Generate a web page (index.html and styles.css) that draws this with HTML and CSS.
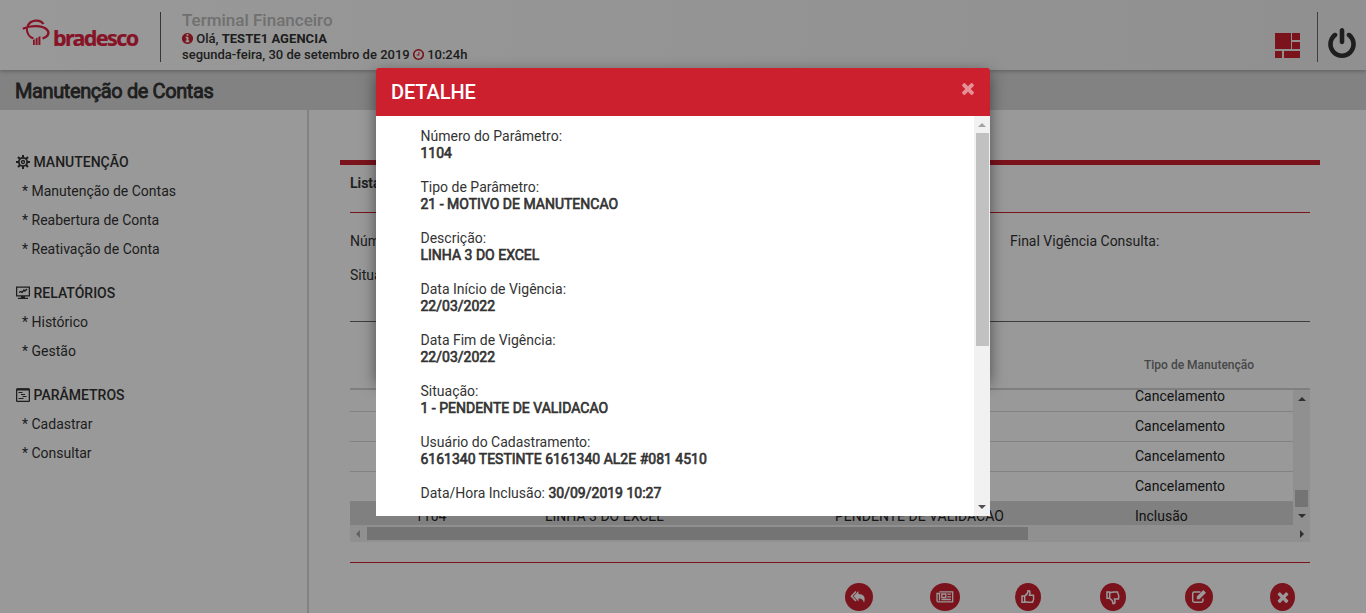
FILE: index.html
```html
<!DOCTYPE html>
<html lang="pt-BR">
<head>
<meta charset="utf-8">
<title>Terminal Financeiro</title>
<link rel="stylesheet" href="styles.css">
</head>
<body>
<div class="page">
  <header class="header">
    <div class="brand">
      <svg class="brand-mark" viewBox="0 0 30 28"><g fill="none" stroke="currentColor"><path d="M5.500 7C8.500 .6 18-.3 21.500 5" stroke-width="2.200"/><path d="M.8 9.800C9 6 20 6.500 24.800 10.500c3.500 3.500 1 7.500-4.300 9" stroke-width="2.300"/><path d="M4.800 8.500c-.3 5.500 2.500 10 6.700 11" stroke-width="1.900"/></g><path d="M11 21l1.800-.8V26H11zM13.600 19.500l2-1V26h-2zM16.400 18l2-1v9h-2z" fill="currentColor"/></svg>
      <span class="brand-name">bradesco</span>
    </div>
    <div class="session">
      <div class="system">Terminal Financeiro</div>
      <div class="line"><svg class="fa" viewBox="0 0 1792 1792"><path fill="currentColor" d="M1152 1376v-160q0-14-9-23t-23-9h-96v-512q0-14-9-23t-23-9h-320q-14 0-23 9t-9 23v160q0 14 9 23t23 9h96v320h-96q-14 0-23 9t-9 23v160q0 14 9 23t23 9h448q14 0 23-9t9-23zm-128-896v-160q0-14-9-23t-23-9h-192q-14 0-23 9t-9 23v160q0 14 9 23t23 9h192q14 0 23-9t9-23zm640 416q0 209-103 385.500t-279.500 279.500-385.500 103-385.500-103-279.500-279.500-103-385.500 103-385.500 279.500-279.500 385.500-103 385.500 103 279.500 279.500 103 385.500z"/></svg> Olá, <b>TESTE1 AGENCIA</b></div>
      <div class="line">segunda-feira, 30 de setembro de 2019 <svg class="fa" viewBox="0 0 1792 1792"><path fill="currentColor" d="M1024 544v448q0 14-9 23t-23 9h-320q-14 0-23-9t-9-23v-64q0-14 9-23t23-9h224v-352q0-14 9-23t23-9h64q14 0 23 9t9 23zm416 352q0-148-73-273t-198-198-273-73-273 73-198 198-73 273 73 273 198 198 273 73 273-73 198-198 73-273zm224 0q0 209-103 385.500t-279.500 279.500-385.500 103-385.500-103-279.500-279.500-103-385.500 103-385.500 279.500-279.500 385.500-103 385.500 103 279.500 279.500 103 385.500z"/></svg> 10:24h</div>
    </div>
    <div class="tools">
      <svg class="tiles" viewBox="0 0 25 25"><path fill="currentColor" d="M0 0h16v16H0zM17 0h8v7h-8zM17 9h8v7h-8zM0 18h7v7H0zM9 18h16v7H9z"/></svg>
      <span class="rule"></span>
      <svg class="power" viewBox="128 0 1536 1664"><path fill="currentColor" d="M1664 896q0 156-61 298t-164 245-245 164-298 61-298-61-245-164-164-245-61-298q0-182 80.500-343t226.500-270q43-32 95.500-25t83.500 50q32 42 24.500 94.500t-49.500 84.500q-98 74-151.500 181t-53.500 228q0 104 40.500 198.500t109.500 163.500 163.500 109.500 198.500 40.500 198.500-40.500 163.500-109.500 109.500-163.500 40.500-198.500q0-121-53.500-228t-151.500-181q-42-32-49.500-84.500t24.500-94.500q31-43 84-50t95 25q146 109 226.500 270t80.500 343zm-640-768v640q0 52-38 90t-90 38-90-38-38-90v-640q0-52 38-90t90-38 90 38 38 90z"/></svg>
    </div>
  </header>
  <div class="titlebar">Manutenção de Contas</div>
  <div class="columns">
    <nav class="menu">
      <section>
        <h2><svg viewBox="0 0 14 14" fill="none" stroke="currentColor"><circle cx="7" cy="7" r="4.200" stroke-width="1.800"/><circle cx="7" cy="7" r="1.500" stroke-width="1.300"/><path stroke-width="2" d="M7 0v3M7 11v3M0 7h3M11 7h3M2 2l2 2M10 10l2 2M12 2l-2 2M4 10l-2 2"/></svg>MANUTENÇÃO</h2>
        <a>* Manutenção de Contas</a><a>* Reabertura de Conta</a><a>* Reativação de Conta</a>
      </section>
      <section>
        <h2><svg viewBox="0 0 14 14" fill="none" stroke="currentColor"><path stroke-width="1.300" d="M.6 1.100h12.800v8.800H.6zM3 6.300l2-.8 1 1 2-2.500 1 1 2-2M2 12.300h10M5 11h4"/></svg>RELATÓRIOS</h2>
        <a>* Histórico</a><a>* Gestão</a>
      </section>
      <section>
        <h2><svg viewBox="0 0 14 14" fill="none" stroke="currentColor"><rect x=".6" y=".8" width="12.800" height="12.600" rx="1" stroke-width="1.300"/><path stroke-width="2" d="M1 1.500h12"/><path d="M2.500 4.500h4M5 6.500h4M6.500 8.500h4M2.500 10.500h5"/></svg>PARÂMETROS</h2>
        <a>* Cadastrar</a><a>* Consultar</a>
      </section>
    </nav>
    <main class="content">
      <div class="list-title">Lista</div>
      <div class="filters"><span>Número</span><span>Final Vigência Consulta:</span><span>Situação</span></div>
      <div class="table">
        <div class="thead"><span>Tipo de Manutenção</span></div>
        <div class="tbody">
          <div class="rows">
            <div class="row"><span></span><span></span><span></span><span>Cancelamento</span></div>
            <div class="row"><span></span><span></span><span></span><span>Cancelamento</span></div>
            <div class="row"><span></span><span></span><span></span><span>Cancelamento</span></div>
            <div class="row"><span></span><span></span><span></span><span>Cancelamento</span></div>
            <div class="row selected"><span>1104</span><span>LINHA 3 DO EXCEL</span><span>PENDENTE DE VALIDACAO</span><span>Inclusão</span></div>
          </div>
          <div class="vbar"><i class="up"></i><b></b><i class="down"></i></div>
        </div>
        <div class="hbar"><i class="left"></i><b></b><i class="right"></i></div>
      </div>
      <div class="actions">
        <span class="btn w28"><svg viewBox="0 0 18 18"><path fill="currentColor" d="M8.500 3v3c5 0 7.500 3 5.500 9-.5-3-2-4.500-5.500-4.500v3L3.500 8.200z"/><path fill="none" stroke="currentColor" stroke-width="1.600" d="M6 3.500L1.500 8.200 6 13"/></svg></span>
        <span class="btn w30"><svg viewBox="0 0 18 18" fill="none" stroke="currentColor" stroke-width="1.300"><path d="M3.500 3.800h13.200v10H2.200C1 13.800 1 13 1 12V5.500h2.500v7M5.800 6h4v3.500h-4zM11.300 6.200H15M11.300 8.800H15M5.500 11.500H15"/></svg></span>
        <span class="btn w26"><svg viewBox="0 0 18 18" fill="none" stroke="currentColor" stroke-width="1.500"><path d="M3 8h2.700v6.300H3zM5.700 8C7.500 7 9 5 9 2.700c2.500-.5 2.300 2 1.500 4.600H14.500c.7 3 0 5-1 7H10c-1.500 0-2.300-.6-4.300-.6"/></svg></span>
        <span class="btn w26"><svg viewBox="0 0 18 18" fill="none" stroke="currentColor" stroke-width="1.500"><path d="M3 4h2.700v6.300H3zM5.700 10.300C7.500 11.300 9 13 9 15.600c2.500.5 2.300-2 1.500-4.600H14.500c.7-3 0-5-1-7H10c-1.500 0-2.300.6-4.300.6"/></svg></span>
        <span class="btn w28"><svg viewBox="0 0 18 18"><path fill="none" stroke="currentColor" stroke-width="1.500" d="M10.500 4H4.300Q2.700 4 2.700 5.600v7Q2.700 14.200 4.300 14.200h7q1.700 0 1.700-1.700v-2"/><path fill="currentColor" d="M6.800 11.200V8.500L13.300 2l2.700 2.700-6.500 6.500z"/></svg></span>
        <span class="btn w25"><svg class="x" viewBox="0 0 1792 1792"><path fill="currentColor" d="M1490 1322q0 40-28 68l-136 136q-28 28-68 28t-68-28l-294-294-294 294q-28 28-68 28t-68-28l-136-136q-28-28-28-68t28-68l294-294-294-294q-28-28-28-68t28-68l136-136q28-28 68-28t68 28l294 294 294-294q28-28 68-28t68 28l136 136q28 28 28 68t-28 68l-294 294 294 294q28 28 28 68z"/></svg></span>
      </div>
    </main>
  </div>
</div>
<div class="overlay">
  <div class="modal">
    <div class="modal-head"><h1>DETALHE</h1><svg viewBox="302 366 1188 1188"><path fill="currentColor" d="M1490 1322q0 40-28 68l-136 136q-28 28-68 28t-68-28l-294-294-294 294q-28 28-68 28t-68-28l-136-136q-28-28-28-68t28-68l294-294-294-294q-28-28-28-68t28-68l136-136q28-28 68-28t68 28l294 294 294-294q28-28 68-28t68 28l136 136q28 28 28 68t-28 68l-294 294 294 294q28 28 28 68z"/></svg></div>
    <div class="modal-body">
      <div class="details">
        <p>Número do Parâmetro:<br><b>1104</b></p>
        <p>Tipo de Parâmetro:<br><b>21 - MOTIVO DE MANUTENCAO</b></p>
        <p>Descrição:<br><b>LINHA 3 DO EXCEL</b></p>
        <p>Data Início de Vigência:<br><b>22/03/2022</b></p>
        <p>Data Fim de Vigência:<br><b>22/03/2022</b></p>
        <p>Situação:<br><b>1 - PENDENTE DE VALIDACAO</b></p>
        <p>Usuário do Cadastramento:<br><b>6161340 TESTINTE 6161340 AL2E #081 4510</b></p>
        <p>Data/Hora Inclusão: <b>30/09/2019 10:27</b></p>
      </div>
      <div class="vbar modal-bar"><i class="up"></i><b></b><i class="down"></i></div>
    </div>
  </div>
</div>
</body>
</html>
```
FILE: styles.css
```css
* { box-sizing: border-box; }
body { margin: 0; height: 613px; overflow: hidden; background: #fff; color: #333; font: 14px/17px Roboto, sans-serif; }
h1, h2, p { margin: 0; }
.page { height: 613px; overflow: hidden; display: flex; flex-direction: column; }

.header { position: relative; height: 70px; flex: none; display: flex; padding-top: 12px; background: linear-gradient(90deg, #fff, #f0f0f0); box-shadow: 0 1px 4px rgba(0,0,0,.3); }
.brand { width: 161px; height: 50px; padding: 7px 0 0 22px; display: flex; border-right: 1px solid #555960; color: #e02040; }
.brand-mark { width: 30px; height: 28px; }
.brand-name { margin: 8px 0 0 1px; font: 700 21.500px/22px "Noto Sans", sans-serif; letter-spacing: -1.600px; -webkit-text-stroke: .2px; }
.session { padding-left: 21px; font-size: 13px; font-weight: 500; line-height: 16px; color: #333; }
.system { font-size: 17px; line-height: 18px; margin-top: -1px; padding-bottom: 1px; height: 20px; color: #bbb; }
.line { white-space: nowrap; }
.line b { letter-spacing: .05px; }
.fa { width: 13px; height: 13px; margin: 0 -1px; vertical-align: -2px; color: #cc202f; }
.tools { margin-left: auto; display: flex; padding-right: 10px; }
.tiles { width: 25px; height: 25px; margin-top: 21px; color: #cc202f; }
.rule { width: 1px; height: 50px; margin: 0 10px 0 17px; background: #666; }
.power { width: 28px; height: 30px; margin-top: 16px; color: #333; }

.titlebar { height: 40px; flex: none; background: #d9d9d9; padding: 0 15px; font-size: 20px; line-height: 43px; letter-spacing: -.400px; -webkit-text-stroke: .8px; }
.columns { flex: 1; display: flex; min-height: 0; }

.menu { width: 309px; padding: 38px 0 0 16px; border-right: 2px solid #d9d9d9; }
.menu section { margin-bottom: 15px; }
.menu h2 { display: flex; align-items: center; gap: 3.500px; font-size: 14px; line-height: 29px; font-weight: 500; }
.menu h2 svg { width: 14px; height: 14px; margin-top: -1px; }
.menu a { display: block; padding-left: 6px; line-height: 29px; }

.content { flex: 1; margin: 50px 46px 0 31px; padding: 0 10px; border-top: 5px solid #cc202f; }
.list-title { height: 48px; padding-top: 10px; border-bottom: 1px solid #cc202f; font-weight: 500; -webkit-text-stroke: .2px; }
.filters { height: 109px; padding-top: 20px; display: grid; grid-template-columns: 660px 1fr; grid-auto-rows: 34px; border-bottom: 1px solid #666; }
.thead { height: 68px; padding: 36px 0 0 794px; font-size: 12px; font-weight: 500; line-height: 15px; color: #777; border-bottom: 2px solid #d4d4d4; }
.tbody { height: 135px; display: flex; overflow: hidden; }
.rows { width: 943px; overflow: hidden; color: #222; }
.row { height: 30px; display: grid; grid-template-columns: 129px 290px 300px 1fr; padding-left: 66px; line-height: 29px; border-bottom: 1px solid #d9d9d9; }
.row:first-child { height: 22px; line-height: 13px; }
.row.selected { background: #d6d6d6; border: 0; }
.row.selected span:first-child { margin-left: -1px; }
.vbar { width: 17px; background: #f1f1f1; display: flex; flex-direction: column; align-items: center; }
.tbody .vbar b { width: 13px; height: 17px; margin-top: 90px; background: #c1c1c1; }
.vbar i, .hbar i { width: 0; height: 0; border: 4px solid transparent; }
.vbar .up { border-top: 0; border-bottom-color: #505050; margin-top: 7px; }
.tbody .vbar .up { margin-bottom: -1px; }
.vbar .down { border-bottom: 0; border-top-color: #505050; margin-top: 7px; }
.hbar { height: 17px; display: flex; align-items: center; background: #f1f1f1; }
.hbar .left { border-left: 0; border-right-color: #a3a3a3; margin: 0 7px 0 6px; }
.hbar b { width: 661px; height: 13px; background: #c1c1c1; }
.hbar .right { border-right: 0; border-left-color: #505050; margin: 0 6px 0 auto; }
.actions { margin-top: 20px; padding: 20px 15px 0 495px; border-top: 1px solid #cc202f; display: grid; grid-template-columns: repeat(5, 85px) 25px; justify-content: start; color: #fff; }
.btn { height: 28px; border-radius: 50%; background: #cc202f; display: grid; place-items: center; }
.btn svg { width: 18px; height: 18px; }
.btn .x { width: 16px; height: 16px; }
.w25 { width: 25px; } .w26 { width: 26px; } .w28 { width: 28px; } .w30 { width: 30px; }

.overlay { position: absolute; inset: 0; background: rgba(0,0,0,.4); padding: 68px 376px 0; }
/* The scrolling body is taller than the dialog box, so the shadow stops short of it. */
.modal { width: 614px; height: 312px; border-radius: 3px 3px 0 0; box-shadow: 0 5px 15px rgba(0,0,0,.5); }
.modal-head { height: 48px; padding: 0 16px 0 15px; display: flex; justify-content: space-between; background: #cc202f; color: #fff; border-radius: 3px 3px 0 0; }
.modal-head h1 { font-size: 20px; line-height: 48px; font-weight: 500; letter-spacing: -.1px; }
.modal-head svg { width: 12px; height: 12px; margin-top: 15px; opacity: .5; }
.modal-body { position: relative; height: 400px; display: flex; background: #fff; }
.details { flex: 1; padding: 12px 0 0 44.500px; }
.details p { margin-bottom: 17px; }
.details b { font-weight: 400; -webkit-text-stroke: .65px; }
.modal-bar { width: 16px; }
.modal-bar .up { border-bottom-color: #a3a3a3; }
.modal-bar b { width: 13px; height: 213px; margin-top: 6px; background: #c1c1c1; }
.modal-bar .down { margin: auto 0 7px; }
```
